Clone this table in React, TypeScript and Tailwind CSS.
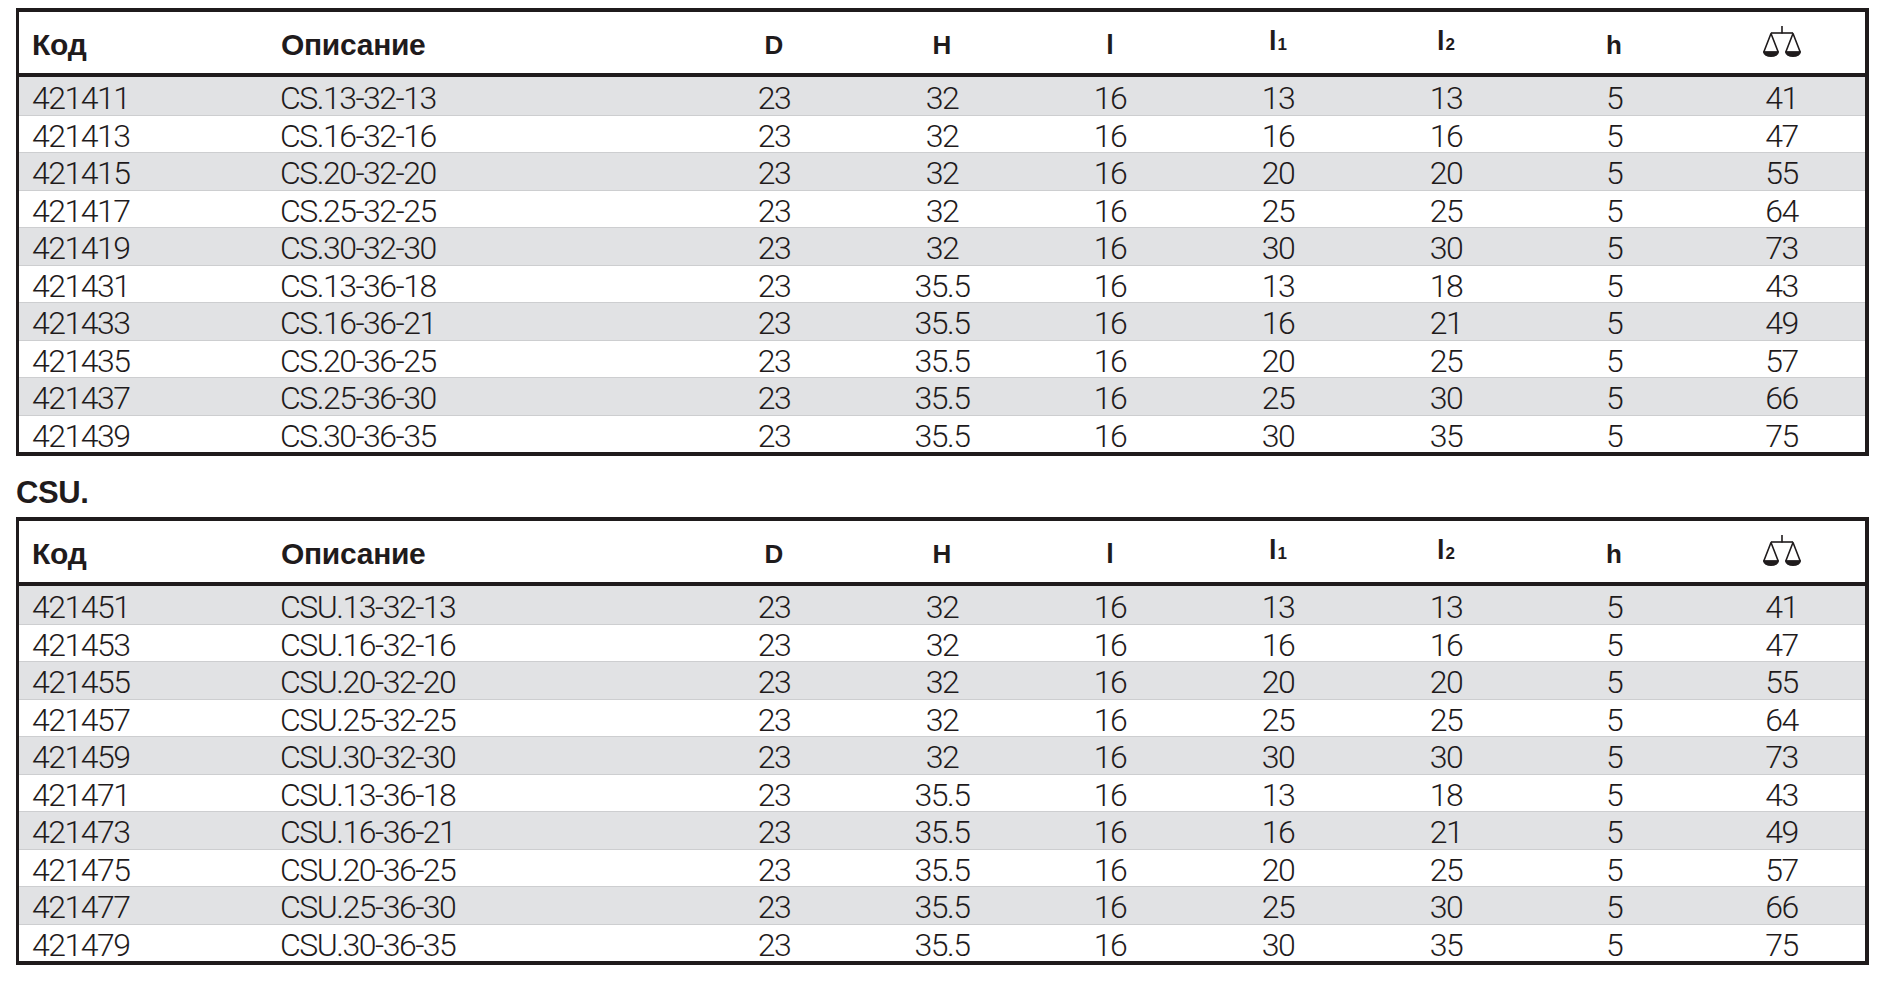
import React from "react";

type Row = string[];

const rowsCS: Row[] = [
  ["421411", "CS.13-32-13", "23", "32", "16", "13", "13", "5", "41"],
  ["421413", "CS.16-32-16", "23", "32", "16", "16", "16", "5", "47"],
  ["421415", "CS.20-32-20", "23", "32", "16", "20", "20", "5", "55"],
  ["421417", "CS.25-32-25", "23", "32", "16", "25", "25", "5", "64"],
  ["421419", "CS.30-32-30", "23", "32", "16", "30", "30", "5", "73"],
  ["421431", "CS.13-36-18", "23", "35.5", "16", "13", "18", "5", "43"],
  ["421433", "CS.16-36-21", "23", "35.5", "16", "16", "21", "5", "49"],
  ["421435", "CS.20-36-25", "23", "35.5", "16", "20", "25", "5", "57"],
  ["421437", "CS.25-36-30", "23", "35.5", "16", "25", "30", "5", "66"],
  ["421439", "CS.30-36-35", "23", "35.5", "16", "30", "35", "5", "75"],
];

const rowsCSU: Row[] = [
  ["421451", "CSU.13-32-13", "23", "32", "16", "13", "13", "5", "41"],
  ["421453", "CSU.16-32-16", "23", "32", "16", "16", "16", "5", "47"],
  ["421455", "CSU.20-32-20", "23", "32", "16", "20", "20", "5", "55"],
  ["421457", "CSU.25-32-25", "23", "32", "16", "25", "25", "5", "64"],
  ["421459", "CSU.30-32-30", "23", "32", "16", "30", "30", "5", "73"],
  ["421471", "CSU.13-36-18", "23", "35.5", "16", "13", "18", "5", "43"],
  ["421473", "CSU.16-36-21", "23", "35.5", "16", "16", "21", "5", "49"],
  ["421475", "CSU.20-36-25", "23", "35.5", "16", "20", "25", "5", "57"],
  ["421477", "CSU.25-36-30", "23", "35.5", "16", "25", "30", "5", "66"],
  ["421479", "CSU.30-36-35", "23", "35.5", "16", "30", "35", "5", "75"],
];

const gridCols =
  "grid grid-cols-[251px_420px_168px_168px_168px_168px_168px_168px_1fr]";

function ScaleIcon() {
  return (
    <svg width="40" height="32" viewBox="0 0 40 32" fill="none">
      <line x1="20" y1="0" x2="20" y2="7.5" stroke="#1f1b1c" strokeWidth="1.6" />
      <line x1="9" y1="7" x2="31" y2="7" stroke="#1f1b1c" strokeWidth="1.6" />
      <polygon points="9,7.5 1.8,26 16.2,26" stroke="#1f1b1c" strokeWidth="1.6" strokeLinejoin="round" />
      <polygon points="31,7.5 23.8,26 38.2,26" stroke="#1f1b1c" strokeWidth="1.6" strokeLinejoin="round" />
      <path d="M1 25.5 H17 A8 5.5 0 0 1 1 25.5 Z" fill="#1f1b1c" />
      <path d="M23 25.5 H39 A8 5.5 0 0 1 23 25.5 Z" fill="#1f1b1c" />
    </svg>
  );
}

function Sym({ children }: { children: React.ReactNode }) {
  return (
    <div className="flex items-end justify-center pb-[14px] text-[26px] leading-[28px] font-bold">
      {children}
    </div>
  );
}

function LSub({ n }: { n: string }) {
  return (
    <span>
      <span className="text-[27px]">l</span>
      <span className="text-[17px] ml-[1px]">{n}</span>
    </span>
  );
}

function Table({ rows }: { rows: Row[] }) {
  return (
    <div className="w-[1853px] border-y-4 border-l-[3px] border-r-4 border-[#1f1b1c] text-[#1f1b1c]">
      <div
        className={`${gridCols} h-[65px] border-b-4 border-[#1f1b1c] font-['Liberation_Sans',Arial,sans-serif]`}
      >
        <div className="flex items-end pl-[13px] pb-[13px] text-[30px] leading-[30px] font-bold tracking-[-0.3px]">
          Код
        </div>
        <div className="flex items-end pl-[11px] pb-[13px] text-[30px] leading-[30px] font-bold tracking-[-0.3px]">
          Описание
        </div>
        <Sym>D</Sym>
        <Sym>H</Sym>
        <Sym>
          <span className="text-[27px]">l</span>
        </Sym>
        <Sym>
          <LSub n="1" />
        </Sym>
        <Sym>
          <LSub n="2" />
        </Sym>
        <Sym>h</Sym>
        <div className="flex items-end justify-center pb-[15px]">
          <ScaleIcon />
        </div>
      </div>
      <div className="font-['Roboto','Liberation_Sans',sans-serif] font-light text-[32px] tracking-[-1.5px]">
        {rows.map((r, i) => (
          <div
            key={r[0]}
            className={`${gridCols} h-[37.5px] ${
              i % 2 === 0 ? "bg-[#e1e2e4]" : "bg-white"
            } ${i > 0 ? "shadow-[inset_0_1px_0_#cdced0]" : ""}`}
          >
            {r.map((c, j) => (
              <div
                key={j}
                className={`pt-[5px] leading-[32.5px] whitespace-nowrap ${
                  j === 0 ? "pl-[13px]" : j === 1 ? "pl-[10px]" : "text-center"
                }`}
              >
                {c}
              </div>
            ))}
          </div>
        ))}
      </div>
    </div>
  );
}

export default function App() {
  return (
    <div className="w-[1894px] h-[984px] bg-white pt-[8px] pl-[16px] text-[#1f1b1c]">
      <Table rows={rowsCS} />
      <div className="mt-[21px] mb-[9px] text-[31px] leading-[31px] font-bold tracking-[-0.4px] font-['Liberation_Sans',Arial,sans-serif]">
        CSU.
      </div>
      <Table rows={rowsCSU} />
    </div>
  );
}
